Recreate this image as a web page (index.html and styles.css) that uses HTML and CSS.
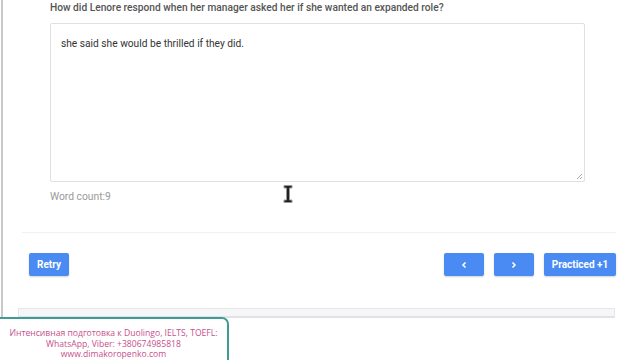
FILE: index.html
```html
<!DOCTYPE html>
<html>
<head>
<meta charset="utf-8">
<link rel="stylesheet" href="styles.css">
</head>
<body>
<div class="frame">
  <div class="qa">
    <p class="question">How did Lenore respond when her manager asked her if she wanted an expanded role?</p>
    <div class="answer">she said she would be thrilled if they did.
      <svg class="grip" width="7" height="7" viewBox="0 0 7 7"><path d="M6 1L1 6M6 4L4 6" stroke="#aaa" stroke-width="1"/></svg>
    </div>
    <p class="count">Word count:9</p>
  </div>
  <div class="sep"></div>
  <div class="actions">
    <button class="btn">Retry</button>
    <div class="right">
      <button class="btn nav"><svg width="8" height="8" viewBox="0 0 8 8"><path d="M5.5 1.5L3 4l2.5 2.5" fill="none" stroke="#fff" stroke-width="1.6"/></svg></button>
      <button class="btn nav"><svg width="8" height="8" viewBox="0 0 8 8"><path d="M2.5 1.5L5 4 2.5 6.5" fill="none" stroke="#fff" stroke-width="1.6"/></svg></button>
      <button class="btn wide">Practiced +1</button>
    </div>
  </div>
  <div class="panel"></div>
</div>
<svg class="cursor" width="12" height="20" viewBox="0 0 12 20"><path d="M2 1.5h8v2.5H7.5v12H10v2.5H2V16h2.5V4H2z" fill="#222" stroke="#999" stroke-width="1"/></svg>
<div class="promo">
  <p>Интенсивная подготовка к Duolingo, IELTS, TOEFL:</p>
  <p>WhatsApp, Viber: +380674985818</p>
  <p>www.dimakoropenko.com</p>
</div>
</body>
</html>
```
FILE: styles.css
```css
* { box-sizing: border-box; }
html, body { margin: 0; padding: 0; background: #fff; }
body { width: 640px; height: 360px; overflow: hidden; position: relative; font-family: Roboto, "Liberation Sans", sans-serif; }
.frame { margin-left: 1px; border-left: 2px solid #c9c9c9; height: 318px; display: flex; flex-direction: column; }
.qa { padding-left: 47px; width: 582px; }
.question { margin: 1px 0 0; font-size: 10.2px; line-height: 13px; color: #555; font-weight: 500; }
.answer { position: relative; margin-top: 9px; height: 159px; border: 1px solid #e0e0e0; border-radius: 2px; padding: 12px 10px; font-size: 10.2px; line-height: 15px; color: #333; }
.grip { position: absolute; right: 1px; bottom: 1px; }
.count { margin: 8px 0 0; font-size: 10.3px; line-height: 13px; color: #9a9a9a; }
.sep { margin: 29px 0 0 19px; width: 594px; border-top: 1px solid #f1f1f1; }
.actions { display: flex; justify-content: space-between; align-items: center; margin: 20px 0 0 26px; width: 587px; }
.right { display: flex; gap: 10px; }
.btn { height: 23px; width: 40px; border: none; border-radius: 2px; background: #4a8bf3; color: #fff; font-family: Roboto, "Liberation Sans", sans-serif; font-weight: 700; font-size: 10px; padding: 0; display: flex; align-items: center; justify-content: center; box-shadow: 0 1px 2px rgba(0,0,0,0.18); }
.wide { width: 72px; }
.panel { margin: 32px 0 0 15px; width: 597px; height: 35px; background: #f6f6f8; border: 1px solid #e6e6ea; border-bottom: 2px solid #e2e2e6; }
.cursor { position: absolute; left: 282px; top: 184px; }
.promo { position: absolute; left: -2px; top: 317px; width: 231px; height: 50px; background: #fff; border: 2px solid #3f9c94; border-top-right-radius: 7px; padding-top: 9px; text-align: center; }
.promo p { margin: 0; font-family: "Open Sans", "Liberation Sans", sans-serif; font-size: 8.6px; line-height: 10.5px; color: #c64f8c; }
```
